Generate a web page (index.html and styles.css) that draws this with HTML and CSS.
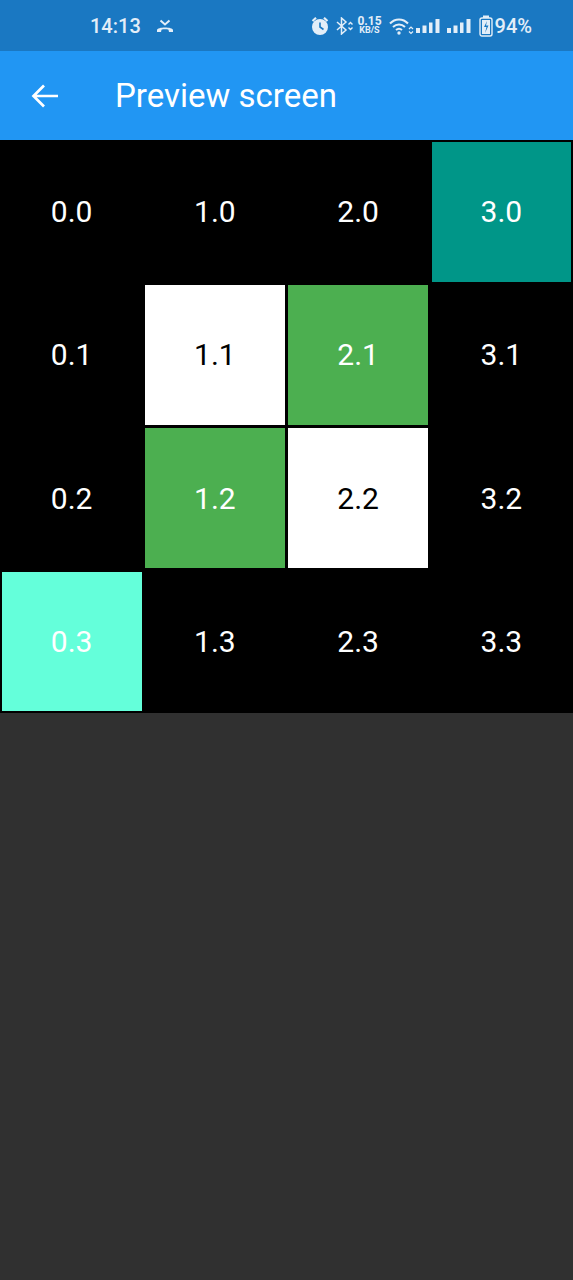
FILE: index.html
```html
<!DOCTYPE html>
<html lang="en">
<head>
  <meta charset="UTF-8" />
  <meta name="viewport" content="width=device-width, initial-scale=1.0"/>
  <title>Preview screen</title>
  <link rel="stylesheet" href="styles.css">
</head>
<body>

  <div class="status-bar">
    <div class="status-left">
      <span class="clock">14:13</span>
      <svg class="missed-call" width="18" height="14" viewBox="0 0 18 14">
        <path d="M4.5 1.5 L9 5.5 L13.5 1.5" fill="none" stroke="#e3eef8" stroke-width="2"/>
        <path d="M1 11 C1 7.5 17 7.5 17 11 L17 13 L13 13 L12.5 10.8 C11 10.2 7 10.2 5.500 10.8 L5 13 L1 13 Z" fill="#e3eef8"/>
      </svg>
    </div>
    <div class="status-right">
      <svg width="20" height="20" viewBox="0 0 20 20">
        <circle cx="10" cy="11" r="8" fill="#e3eef8"/>
        <path d="M2.500 5 L6 1.800 M17.500 5 L14 1.800" stroke="#e3eef8" stroke-width="2.200"/>
        <path d="M10 6.500 V11 L13.500 13.500" fill="none" stroke="#1a78c2" stroke-width="1.600"/>
      </svg>
      <svg class="gap-bt" width="19" height="18" viewBox="0 0 19 18">
        <path d="M2 5 L11 13 L6.500 17 V1 L11 5 L2 13" fill="none" stroke="#e3eef8" stroke-width="1.500"/>
        <path d="M13.500 7.500 L15.500 5.500 L17.500 7.500 M13.500 10.500 L15.500 12.500 L17.500 10.500" fill="none" stroke="#e3eef8" stroke-width="1.400"/>
      </svg>
      <div class="speed"><span>0.15</span><span class="speed-unit">KB/S</span></div>
      <svg class="gap-wifi" width="25" height="18" viewBox="0 0 25 18">
        <path d="M1 6.500 C6 1 14 1 19 6.500 M4 10 C7.500 6.500 12.500 6.500 16 10 M7 13 C9 11.300 11 11.300 13 13" fill="none" stroke="#e3eef8" stroke-width="2"/>
        <circle cx="10" cy="16" r="1.700" fill="#e3eef8"/>
        <path d="M20 12 L22 10 L24 12 M20 14.500 L22 16.500 L24 14.500" fill="none" stroke="#e3eef8" stroke-width="1.200"/>
      </svg>
      <svg class="gap-signal" width="24" height="16" viewBox="0 0 24 16">
        <rect x="0" y="10" width="4" height="5" fill="#e3eef8"/>
        <rect x="6.500" y="7.500" width="4" height="7.500" fill="#e3eef8"/>
        <rect x="13" y="4.500" width="3.500" height="10.500" fill="#e3eef8"/>
        <rect x="19.500" y="1" width="4" height="14" fill="#e3eef8"/>
      </svg>
      <svg class="gap-signal2" width="24" height="16" viewBox="0 0 24 16">
        <rect x="0" y="10" width="4" height="5" fill="#e3eef8"/>
        <rect x="6.500" y="7.500" width="4" height="7.500" fill="#e3eef8"/>
        <rect x="13" y="4.500" width="3.500" height="10.500" fill="#e3eef8"/>
        <rect x="19.500" y="1" width="4" height="14" fill="#e3eef8"/>
      </svg>
      <svg class="gap-batt" width="14" height="22" viewBox="0 0 14 22">
        <rect x="4" y="0.500" width="6" height="2.500" fill="#e3eef8"/>
        <rect x="1" y="3" width="12" height="18" rx="2" fill="none" stroke="#e3eef8" stroke-width="1.400"/>
        <rect x="3" y="5" width="8" height="14" fill="#e3eef8"/>
        <path d="M8 6 L5 12 H7.500 L6 18 L9.500 10.500 H7 Z" fill="#1a78c2"/>
      </svg>
      <span class="battery">94%</span>
    </div>
  </div>

  <header class="app-bar">
    <svg class="back" width="28" height="26" viewBox="0 0 28 26">
      <path d="M27 13 H3 M13 2.500 L2.500 13 L13 23.500" fill="none" stroke="#fff" stroke-width="2.700"/>
    </svg>
    <h1>Preview screen</h1>
  </header>

  <div class="grid">
    <div class="cell">0.0</div>
    <div class="cell">1.0</div>
    <div class="cell">2.0</div>
    <div class="cell teal">3.0</div>

    <div class="cell">0.1</div>
    <div class="cell white">1.1</div>
    <div class="cell green">2.1</div>
    <div class="cell">3.1</div>

    <div class="cell">0.2</div>
    <div class="cell green">1.2</div>
    <div class="cell white">2.2</div>
    <div class="cell">3.2</div>

    <div class="cell aqua">0.3</div>
    <div class="cell">1.3</div>
    <div class="cell">2.3</div>
    <div class="cell">3.3</div>
  </div>

</body>
</html>
```

FILE: styles.css
```css
* {
  box-sizing: border-box;
  font-family: Roboto, Arial, sans-serif;
}
body {
  margin: 0;
  min-height: 1280px;
  background-color: #303030;
}
.status-bar {
  height: 51px;
  background-color: #1a78c2;
  color: #e3eef8;
  display: flex;
  align-items: center;
  justify-content: space-between;
  padding: 0 41px 0 90px;
}
.status-left, .status-right {
  display: flex;
  align-items: center;
}
.clock {
  font-size: 20px;
  font-weight: 500;
}
.missed-call {
  margin-left: 15px;
}
.gap-bt {
  margin-left: 5px;
}
.speed {
  display: flex;
  flex-direction: column;
  align-items: center;
  margin-left: 3px;
  font-size: 12px;
  font-weight: 700;
  line-height: 10px;
}
.speed-unit {
  font-size: 9px;
  line-height: 9px;
}
.gap-wifi {
  margin-left: 7px;
}
.gap-signal {
  margin-left: 2px;
}
.gap-signal2 {
  margin-left: 7px;
}
.gap-batt {
  margin-left: 8px;
}
.battery {
  margin-left: 2px;
  font-size: 20px;
  font-weight: 500;
}
.app-bar {
  height: 89px;
  background-color: #2196f3;
  color: #ffffff;
  display: flex;
  align-items: center;
  padding-left: 31px;
}
.back {
  flex: none;
}
h1 {
  margin: 0 0 0 56px;
  font-size: 33px;
  font-weight: 400;
}
.grid {
  display: grid;
  grid-template-columns: repeat(4, 1fr);
  grid-auto-rows: 143.25px;
  background-color: #000000;
}
.cell {
  margin: 1.75px;
  display: flex;
  align-items: center;
  justify-content: center;
  font-size: 30px;
  color: #ffffff;
}
.white {
  background-color: #ffffff;
  color: #000000;
}
.green {
  background-color: #4caf50;
}
.teal {
  background-color: #009688;
}
.aqua {
  background-color: #64ffda;
}
```
